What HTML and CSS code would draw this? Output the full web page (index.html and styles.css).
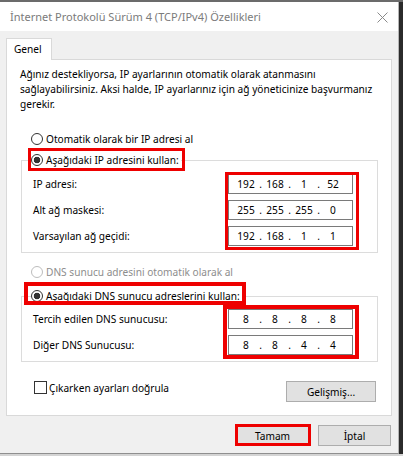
FILE: index.html
```html
<!DOCTYPE html>
<html lang="tr">
<head>
<meta charset="utf-8">
<title>İnternet Protokolü Sürüm 4 (TCP/IPv4) Özellikleri</title>
<link rel="stylesheet" href="styles.css">
</head>
<body>
<div class="screen">
  <div class="topline"></div>
  <div class="row">
    <div class="window">
      <div class="titlebar">
        <span class="title">İnternet Protokolü Sürüm 4 (TCP/IPv4) Özellikleri</span>
        <svg class="close" width="11" height="11" viewBox="0 0 11 11" aria-hidden="true">
          <path d="M0.5 0.5 L10.5 10.5 M10.5 0.5 L0.5 10.5" stroke="#8a8a8a" stroke-width="1" fill="none"/>
        </svg>
      </div>
      <div class="body">
        <div class="tabs"><div class="tab">Genel</div></div>
        <div class="panel">
          <p class="intro">Ağınız destekliyorsa, IP ayarlarının otomatik olarak atanmasını<br>sağlayabilirsiniz. Aksi halde, IP ayarlarınız için ağ yöneticinize başvurmanız<br>gerekir.</p>

          <div class="option option-top"><span class="radio"></span><span>Otomatik olarak bir IP adresi al</span></div>

          <fieldset class="group group-ip">
            <legend class="legend mark mark-legend-ip"><span class="radio checked"></span><span>Aşağıdaki IP adresini kullan:</span></legend>
            <div class="grid">
              <div class="labels">
                <div class="lbl">IP adresi:</div>
                <div class="lbl">Alt ağ maskesi:</div>
                <div class="lbl">Varsayılan ağ geçidi:</div>
              </div>
              <div class="fields mark mark-fields-ip">
                <div class="ip"><span class="oct">192</span><span class="dot">.</span><span class="oct">168</span><span class="dot">.</span><span class="oct">1</span><span class="dot">.</span><span class="oct">52</span></div>
                <div class="ip"><span class="oct">255</span><span class="dot">.</span><span class="oct">255</span><span class="dot">.</span><span class="oct">255</span><span class="dot">.</span><span class="oct">0</span></div>
                <div class="ip"><span class="oct">192</span><span class="dot">.</span><span class="oct">168</span><span class="dot">.</span><span class="oct">1</span><span class="dot">.</span><span class="oct">1</span></div>
              </div>
            </div>
          </fieldset>

          <div class="option option-dns disabled"><span class="radio"></span><span>DNS sunucu adresini otomatik olarak al</span></div>

          <fieldset class="group group-dns">
            <legend class="legend mark mark-legend-dns"><span class="radio checked"></span><span>Aşağıdaki DNS sunucu adreslerini kullan:</span></legend>
            <div class="grid">
              <div class="labels">
                <div class="lbl">Tercih edilen DNS sunucusu:</div>
                <div class="lbl">Diğer DNS Sunucusu:</div>
              </div>
              <div class="fields mark mark-fields-dns">
                <div class="ip"><span class="oct">8</span><span class="dot">.</span><span class="oct">8</span><span class="dot">.</span><span class="oct">8</span><span class="dot">.</span><span class="oct">8</span></div>
                <div class="ip"><span class="oct">8</span><span class="dot">.</span><span class="oct">8</span><span class="dot">.</span><span class="oct">4</span><span class="dot">.</span><span class="oct">4</span></div>
              </div>
            </div>
          </fieldset>

          <div class="footer-row">
            <div class="check-row"><span class="checkbox"></span><span>Çıkarken ayarları doğrula</span></div>
            <div class="btn btn-adv">Gelişmiş...</div>
          </div>
        </div>
        <div class="buttons">
          <div class="btn btn-ok mark mark-ok">Tamam</div>
          <div class="btn btn-cancel">İptal</div>
        </div>
      </div>
    </div>
    <div class="side"></div>
  </div>
  <div class="bottomline"></div>
</div>
</body>
</html>
```

FILE: styles.css
```css
* { box-sizing: border-box; }

html, body {
  margin: 0;
  padding: 0;
  background: #c9c9c9;
}

body {
  font-family: "Noto Sans", "Open Sans", sans-serif;
  font-size: 10.15px;
  color: #000;
  width: 403px;
  height: 456px;
  overflow: hidden;
}

.screen {
  display: flex;
  flex-direction: column;
  width: 403px;
}

.topline {
  height: 2px;
  background: #6b6b6b;
}

.row {
  display: flex;
}

.window {
  width: 399px;
  border-right: 1px solid #b5b5b5;
  border-bottom: 1px solid #8f8f8f;
  background: #f0f0f0;
}

.side {
  width: 4px;
  background: #2b2b2b;
}

.bottomline {
  height: 3px;
  background: #d4d4d4;
}

/* Title bar */
.titlebar {
  height: 29px;
  background: #fff;
  display: flex;
  align-items: center;
  padding-left: 10px;
}

.title {
  font-size: 11px;
  color: #7b7b7b;
  white-space: nowrap;
}

.close {
  margin-left: auto;
  margin-right: 10px;
  margin-top: 1px;
  display: block;
}

/* Body */
.body {
  padding: 7px 6px 7px 6px;
}

.tabs {
  display: flex;
  position: relative;
  z-index: 1;
  margin-bottom: -1px;
}

.tab {
  width: 46px;
  height: 22px;
  background: #fff;
  border: 1px solid #d9d9d9;
  border-bottom: none;
  padding-left: 7px;
  line-height: 20px;
}

.panel {
  background: #fff;
  border: 1px solid #d9d9d9;
  padding: 0 13px 13px 0;
  display: flex;
  flex-direction: column;
}

.intro {
  margin: 0;
  padding: 7px 0 0 13px;
  line-height: 15px;
  white-space: nowrap;
}

.option {
  display: flex;
  align-items: center;
  height: 16px;
  gap: 3px;
  white-space: nowrap;
}

.option-top {
  margin: 19px 0 0 24px;
}

.option-dns {
  margin: 11px 0 0 24px;
}

.disabled {
  color: #8d8d8d;
}

.radio {
  width: 12px;
  height: 12px;
  border-radius: 50%;
  border: 1px solid #333;
  background: #fff;
  flex: none;
}

.radio.checked {
  background: radial-gradient(circle, #333 0 3px, #fff 3.6px);
}

.disabled .radio {
  border-color: #bdbdbd;
}

/* Group boxes */
.group {
  margin: 5px 0 0 14px;
  padding: 6px 24px 6px 11px;
  border: 1px solid #dcdcdc;
  min-width: 0;
}

.group-dns {
  margin-top: 8px;
  padding-top: 5px;
}

.legend {
  display: flex;
  align-items: center;
  gap: 3px;
  height: 16px;
  padding: 0 2px 0 0;
  margin-left: -2px;
  white-space: nowrap;
}

.grid {
  display: flex;
  justify-content: space-between;
}

.labels, .fields {
  display: flex;
  flex-direction: column;
  gap: 6px;
}

.lbl {
  height: 20px;
  line-height: 20px;
  white-space: nowrap;
}

.fields {
  width: 125px;
}

.ip {
  height: 20px;
  border: 1px solid #7a7a7a;
  background: #fff;
  display: flex;
  align-items: center;
  padding: 0 6px;
  line-height: 18px;
}

.oct {
  width: 22px;
  text-align: center;
}

.dot {
  width: 7px;
  text-align: center;
}

/* Footer of panel */
.footer-row {
  display: flex;
  justify-content: space-between;
  align-items: flex-start;
  margin: 19px 2px 0 27px;
}

.check-row {
  display: flex;
  align-items: center;
  gap: 2px;
  height: 13px;
  white-space: nowrap;
}

.checkbox {
  width: 13px;
  height: 13px;
  border: 1px solid #333;
  background: #fff;
  flex: none;
}

.btn {
  height: 21px;
  background: #e1e1e1;
  border: 1px solid #adadad;
  display: flex;
  align-items: center;
  justify-content: center;
  white-space: nowrap;
}

.btn-adv {
  width: 90px;
}

.buttons {
  display: flex;
  justify-content: flex-end;
  gap: 9px;
  margin-top: 9px;
  padding-right: 1px;
}

.btn-ok, .btn-cancel {
  width: 73px;
}

/* Red annotation boxes drawn over the dialog */
.mark {
  position: relative;
}

.mark::after {
  content: "";
  position: absolute;
  border: 3px solid #ee0000;
  pointer-events: none;
}

.mark-legend-ip::after {
  top: -4px;
  bottom: -3px;
  left: -3px;
  right: -4px;
}

.mark-fields-ip::after {
  top: -2px;
  bottom: -4px;
  left: -3px;
  right: -6px;
}

.mark-legend-dns::after {
  border-width: 4px;
  top: -6px;
  bottom: -1px;
  left: -7px;
  right: -4px;
}

.mark-fields-dns::after {
  border-width: 4px;
  top: -4px;
  bottom: -4px;
  left: -5px;
  right: -6px;
}

.mark-ok::after {
  top: -2px;
  bottom: -1px;
  left: -2px;
  right: -3px;
}
```
